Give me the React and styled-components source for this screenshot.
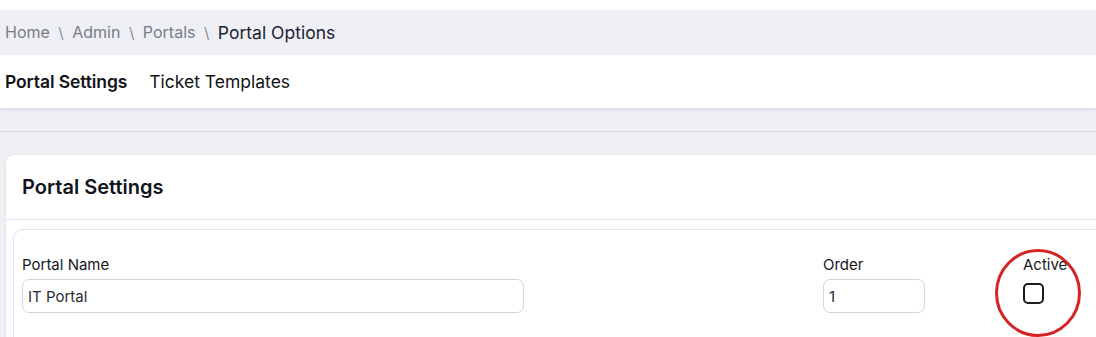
import React from "react";
import styled, { createGlobalStyle } from "styled-components";

const Global = createGlobalStyle`
  html, body {
    margin: 0;
    padding: 0;
    background: #ffffff;
    font-family: Inter, "Noto Sans", sans-serif;
    color: #111318;
  }
`;

const Page = styled.div`
  width: 1096px;
  height: 337px;
  overflow: hidden;
  padding-top: 10px;
  box-sizing: border-box;
  background: #ffffff;
`;

const Breadcrumb = styled.div`
  height: 45px;
  display: flex;
  align-items: center;
  gap: 8.5px;
  padding-left: 5px;
  padding-bottom: 1px;
  box-sizing: border-box;
  background: #eff0f5;
`;

const Crumb = styled.span`
  color: ${(p) => (p.current ? "#1c2233" : "#777c87")};
  font-size: ${(p) => (p.current ? "17.5px" : "16px")};
`;

const Sep = styled.span`
  color: #8a8e98;
  font-size: 15px;
`;

const Tabs = styled.div`
  height: 53px;
  display: flex;
  align-items: center;
  gap: 22px;
  padding-left: 5px;
  background: #ffffff;
  box-shadow: 0 2px 3px rgba(0, 0, 0, 0.08);
  position: relative;
`;

const Tab = styled.span`
  font-size: 17.5px;
  font-weight: ${(p) => (p.active ? 600 : 400)};
  letter-spacing: ${(p) => (p.active ? "-0.1px" : "0")};
  color: #111318;
`;

const Body = styled.div`
  background: #eff0f5;
  padding-top: 23px;
`;

const Rule = styled.div`
  border-top: 1px solid #d9dbe1;
  padding: 22px 0 0 5px;
`;

const Card = styled.div`
  background: #ffffff;
  border: 1px solid #e4e5ea;
  border-right: none;
  border-radius: 9px 0 0 0;
  height: 200px;
`;

const CardHeader = styled.div`
  height: 64px;
  display: flex;
  align-items: center;
  padding-left: 16px;
  border-bottom: 1px solid #e4e5ea;
  font-size: 20px;
  font-weight: 600;
  color: #111318;
`;

const Inner = styled.div`
  margin: 9px 0 0 7px;
  border: 1px solid #e4e5ea;
  border-right: none;
  border-radius: 10px 0 0 0;
  height: 140px;
  padding: 26px 0 0 8px;
  display: flex;
`;

const Field = styled.div`
  display: flex;
  flex-direction: column;
  gap: 6px;
  width: ${(p) => p.w}px;
  position: relative;
`;

const Label = styled.label`
  font-size: 15px;
  color: #16181d;
  line-height: 17px;
`;

const Input = styled.div`
  box-sizing: border-box;
  width: ${(p) => p.w}px;
  height: 34px;
  border: 1px solid #d4d6dc;
  border-radius: 7px;
  display: flex;
  align-items: center;
  padding-left: 5px;
  font-size: 15px;
  color: #2a2d33;
`;

const Check = styled.div`
  box-sizing: border-box;
  width: 21px;
  height: 21px;
  border: 2.5px solid #1b1d22;
  border-radius: 5px;
  margin-top: 4px;
`;

const Ring = styled.svg`
  position: absolute;
  left: -28px;
  top: -14px;
  pointer-events: none;
`;

export default function App() {
  return (
    <Page>
      <Global />
      <Breadcrumb>
        <Crumb>Home</Crumb>
        <Sep>\</Sep>
        <Crumb>Admin</Crumb>
        <Sep>\</Sep>
        <Crumb>Portals</Crumb>
        <Sep>\</Sep>
        <Crumb current>Portal Options</Crumb>
      </Breadcrumb>
      <Tabs>
        <Tab active>Portal Settings</Tab>
        <Tab>Ticket Templates</Tab>
      </Tabs>
      <Body>
        <Rule>
          <Card>
            <CardHeader>Portal Settings</CardHeader>
            <Inner>
              <Field w={801}>
                <Label>Portal Name</Label>
                <Input w={502}>IT Portal</Input>
              </Field>
              <Field w={200}>
                <Label>Order</Label>
                <Input w={102}>1</Input>
              </Field>
              <Field w={60}>
                <Label>Active</Label>
                <Check />
                <Ring width="90" height="100" viewBox="0 0 90 100">
                  <ellipse cx="43" cy="51" rx="41.5" ry="42.5" fill="none" stroke="#d42323" strokeWidth="3" />
                </Ring>
              </Field>
            </Inner>
          </Card>
        </Rule>
      </Body>
    </Page>
  );
}
